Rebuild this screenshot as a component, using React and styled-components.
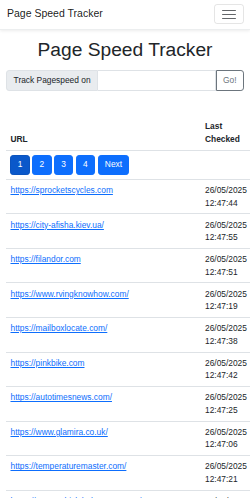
import React from "react";
import styled, { createGlobalStyle } from "styled-components";

const Global = createGlobalStyle`
  html, body { margin: 0; padding: 0; overflow-x: hidden; background: #fff; }
  body {
    font-family: "Liberation Sans", Arial, sans-serif;
    font-size: 8.4px;
    line-height: 1.5;
    color: #212529;
  }
  * { box-sizing: border-box; }
`;

const Navbar = styled.nav`
  display: flex;
  align-items: center;
  justify-content: space-between;
  height: 29.5px;
  padding: 0 6.5px 0 7px;
  background: #fff;
  box-shadow: 0 1px 3px rgba(0, 0, 0, 0.08);
  border-bottom: 1px solid #eceeef;
`;

const Brand = styled.a`
  font-size: 10.5px;
  color: rgba(0, 0, 0, 0.9);
  text-decoration: none;
  line-height: 1.5;
`;

const Toggler = styled.button`
  width: 30px;
  height: 20px;
  padding: 0;
  display: flex;
  align-items: center;
  justify-content: center;
  background: transparent;
  border: 1px solid rgba(0, 0, 0, 0.1);
  border-radius: 3px;
`;

const Container = styled.main`
  padding: 0 6.3px;
`;

const Title = styled.h1`
  margin: 8px 0 9.5px;
  font-size: 19.2px;
  font-weight: 500;
  line-height: 1.2;
  text-align: center;
  color: #212529;
`;

const InputGroup = styled.div`
  display: flex;
  height: 20.5px;
  width: 100%;
`;

const Addon = styled.span`
  display: flex;
  align-items: center;
  padding: 0 6.3px;
  background: #e9ecef;
  border: 1px solid #dee2e6;
  border-radius: 3.1px 0 0 3.1px;
  color: #212529;
  white-space: nowrap;
`;

const Input = styled.input`
  flex: 1;
  min-width: 0;
  border: 1px solid #dee2e6;
  border-left: none;
  padding: 0 6px;
  font: inherit;
  outline: none;
`;

const GoButton = styled.button`
  width: 28px;
  padding: 0;
  font: inherit;
  color: #6c757d;
  background: #fff;
  border: 1px solid #6c757d;
  border-radius: 0 3.1px 3.1px 0;
`;

const Table = styled.table`
  margin-top: 25.5px;
  width: 246.5px;
  table-layout: fixed;
  border-collapse: collapse;
  line-height: 12.6px;
`;

const HeadCell = styled.th`
  text-align: left;
  vertical-align: bottom;
  font-weight: 700;
  padding: 4.2px;
  border-bottom: 1px solid #dee2e6;
  width: ${(p) => p.$w};
`;

const Cell = styled.td`
  vertical-align: top;
  padding: 4.2px;
  border-bottom: 1px solid #dee2e6;
  white-space: ${(p) => (p.$nowrap ? "nowrap" : "normal")};
`;

const Pager = styled.div`
  display: flex;
  gap: 2.5px;
`;

const PageButton = styled.button`
  height: 19.8px;
  padding: 0 6.3px;
  font: inherit;
  line-height: 1;
  color: #fff;
  background: ${(p) => (p.$active ? "#0a58ca" : "#0d6efd")};
  border: 1px solid ${(p) => (p.$active ? "#0a53be" : "#0d6efd")};
  border-radius: 3.1px;
  min-width: 18.5px;
`;

const Link = styled.a`
  color: #0d6efd;
  text-decoration: underline;
`;

const rows = [
  ["https://sprocketscycles.com", "12:47:44"],
  ["https://city-afisha.kiev.ua/", "12:47:55"],
  ["https://filandor.com", "12:47:51"],
  ["https://www.rvingknowhow.com/", "12:47:19"],
  ["https://mailboxlocate.com/", "12:47:38"],
  ["https://pinkbike.com", "12:47:42"],
  ["https://autotimesnews.com/", "12:47:25"],
  ["https://www.glamira.co.uk/", "12:47:06"],
  ["https://temperaturemaster.com/", "12:47:21"],
  ["https://www.vehiclehubsource.com/", "12:47:33"],
];

export default function App() {
  return (
    <>
      <Global />
      <Navbar>
        <Brand href="#">Page Speed Tracker</Brand>
        <Toggler aria-label="Toggle navigation">
          <svg width="14" height="11" viewBox="0 0 14 11">
            <g stroke="rgba(33,37,41,0.7)" strokeWidth="1.2" strokeLinecap="round">
              <line x1="0.6" y1="1.5" x2="13.4" y2="1.5" />
              <line x1="0.6" y1="5.5" x2="13.4" y2="5.5" />
              <line x1="0.6" y1="9.5" x2="13.4" y2="9.5" />
            </g>
          </svg>
        </Toggler>
      </Navbar>
      <Container>
        <Title>Page Speed Tracker</Title>
        <InputGroup>
          <Addon>Track Pagespeed on</Addon>
          <Input type="text" />
          <GoButton>Go!</GoButton>
        </InputGroup>
        <Table>
          <thead>
            <tr>
              <HeadCell $w="194.5px">URL</HeadCell>
              <HeadCell $w="52px">Last Checked</HeadCell>
            </tr>
          </thead>
          <tbody>
            <tr>
              <Cell colSpan={2}>
                <Pager>
                  <PageButton $active>1</PageButton>
                  <PageButton>2</PageButton>
                  <PageButton>3</PageButton>
                  <PageButton>4</PageButton>
                  <PageButton>Next</PageButton>
                </Pager>
              </Cell>
            </tr>
            {rows.map(([url, time]) => (
              <tr key={url}>
                <Cell>
                  <Link href="#">{url}</Link>
                </Cell>
                <Cell>
                  26/05/2025
                  <br />
                  {time}
                </Cell>
              </tr>
            ))}
          </tbody>
        </Table>
      </Container>
    </>
  );
}
